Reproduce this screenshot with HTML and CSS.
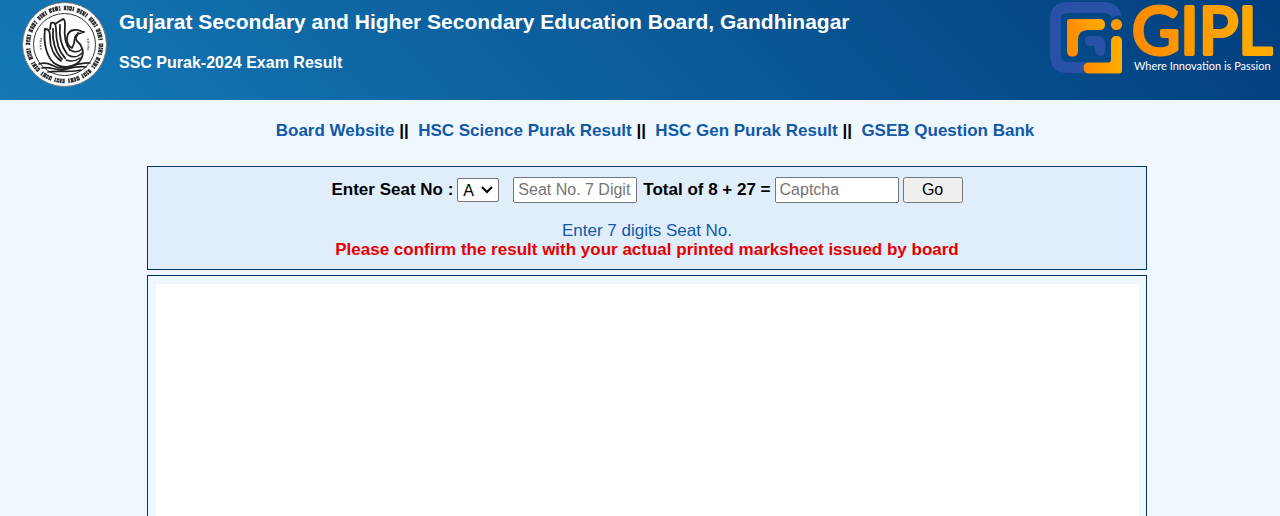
FILE: index.html
```
<!DOCTYPE html>
<html lang="en">
<head>
    <meta charset="UTF-8">
    <meta name="viewport" content="width=device-width, initial-scale=1">
    <title>GSEB Result</title>
    <link rel="stylesheet" href="styles.css">
</head>
<body>
    <header class="header">
        <svg class="seal" viewBox="0 0 85 85" aria-hidden="true">
            <circle cx="42.500" cy="42.500" r="42" fill="#fff" stroke="#777" stroke-width="1"/>
            <!-- lettering ring -->
            <g fill="none" stroke="#333">
                <circle cx="42.500" cy="42.500" r="36.500" stroke-width="4.500" stroke-dasharray="2.500 .6 1.800 .5 2.800 .7 1.500 3 3 .6 2 .5 3.200 .8 1.500 3.500"/>
                <circle cx="42.500" cy="42.500" r="36.500" stroke="#fff" stroke-width="1" stroke-dasharray="1 2.300 .8 3.800"/>
                <circle cx="42.500" cy="42.500" r="31" stroke-width="1"/>
                <circle cx="42.500" cy="42.500" r="24" stroke="#888" stroke-width="2" stroke-dasharray="1.500 1 2 .8 1 1 2 .7 1.500 62.400 1.500 1 2 .8 1 1 2 .7 1.500 100" transform="rotate(168 42.500 42.500)"/>
            </g>
            <!-- swan -->
            <g fill="none" stroke="#222" stroke-width="1.800" stroke-linecap="round" stroke-linejoin="round">
                <path d="M23 27C21 42 25 55 32 61C40 67 54 66 59 57C63 50 60 43 55 39C52 36 56 33 56 31"/>
                <path d="M50 46C43 43 43 29 52 28C57 27 59 30 62 30L56 32C50 34 55 39 50 46"/>
                <path d="M23 27C28 27 28 31 28 36C28 45 32 54 39 59"/>
                <path d="M28 27L29 21Q34 19 34 27C34 38 36 49 43 56"/>
                <path d="M33 22L41 17Q43 17 43 23C42 33 43 42 48 48"/>
                <path d="M38 23C37 34 39 44 45 52M31 27C30 38 33 50 40 57"/>
                <path d="M48 48C53 51 57 50 60 47M46 53C51 56 56 55 60 51M44 58C50 60 54 59 58 56" stroke-width="1.500"/>
                <path d="M17 62C24 60 28 62 34 65C45 69 53 60 68 61M20 66C29 64 36 70 45 67C53 65 58 64 64 65M26 70C36 68 48 71 59 68" stroke-width="1.700"/>
            </g>
        </svg>
        <div class="titles">
            <h1>Gujarat Secondary and Higher Secondary Education Board, Gandhinagar</h1>
            <h2>SSC Purak-2024 Exam Result</h2>
        </div>
        <svg class="gipl" viewBox="0 0 230 80" role="img" aria-label="GIPL, Where Innovation is Passion">
            <defs>
                <linearGradient id="orange" x1="0" y1="0" x2="1" y2="0">
                    <stop offset="0" stop-color="#ff8a00"/>
                    <stop offset="1" stop-color="#ffae00"/>
                </linearGradient>
            </defs>
            <path d="M0 18Q0 0 18 0H54Q68 0 72 14Q67 12 62 16Q60 11 54 11H18Q11 11 11 18V53Q11 60 18 60H37Q32 65 34 71H18Q0 71 0 53Z" fill="#2852a8"/>
            <path d="M40 34H47Q55 34 55 42V49Q55 54 50 54Q45 53 45 47V44H40Q35 44 35 39Q35 34 40 34Z" fill="#2852a8"/>
            <path d="M20 17H49.500Q55 17 55 22.500Q55 28 49.500 28H38Q28 28 28 38V49Q28 54.500 22.500 54.500Q17 54.500 17 49V20Q17 17 20 17Z" fill="url(#orange)"/>
            <path d="M66.500 34Q72 34 72 39.500V68.500Q72 71.500 69 71.500H39Q33.500 71.500 33.500 66Q33.500 60.500 39 60.500H58Q61 60.500 61 57.500V39.500Q61 34 66.500 34Z" fill="url(#orange)"/>
            <circle cx="66.500" cy="22.500" r="5.600" fill="#ff9b00"/>
            <text class="gipl-name" x="82" y="52">GIPL</text>
            <text class="gipl-tagline" x="84" y="68">Where Innovation is Passion</text>
        </svg>
    </header>

    <nav class="links">
        <a href="#">Board Website</a> ||&nbsp;
        <a href="#">HSC Science Purak Result</a> ||&nbsp;
        <a href="#">HSC Gen Purak Result</a> ||&nbsp;
        <a href="#">GSEB Question Bank</a>
    </nav>

    <main class="content">
        <form class="search">
            <div class="fields">
                <label for="series">Enter Seat No :</label>
                <select id="series">
                    <option>A</option>
                    <option>B</option>
                    <option>C</option>
                </select>
                <input id="seat" class="seat" type="text" maxlength="7" placeholder="Seat No. 7 Digit" aria-label="Seat No.">
                <label for="captcha">Total of 8 + 27 =</label>
                <input id="captcha" type="text" placeholder="Captcha">
                <button type="button">Go</button>
            </div>
            <p class="hint">Enter 7 digits Seat No.</p>
            <p class="notice">Please confirm the result with your actual printed marksheet issued by board</p>
        </form>
        <section class="result">
            <div class="sheet"></div>
        </section>
    </main>
</body>
</html>
```

FILE: styles.css
```
* {
    box-sizing: border-box;
}
body {
    margin: 0;
    background: #f0f8ff;
    color: #000;
    font-family: Arial, "Liberation Sans", sans-serif;
    font-size: 17px;
}
.header {
    display: flex;
    align-items: flex-start;
    height: 100px;
    padding: 2px 0 0 22px;
    background: linear-gradient(45deg, #1479b6, #023e7d);
    color: #fff;
}
.seal {
    flex: none;
    width: 85px;
    height: 85px;
}
.titles {
    flex: 1;
    padding: 8px 0 0 12px;
}
h1 {
    margin: 0 0 17px;
    font-size: 21px;
    line-height: 24px;
}
h2 {
    margin: 0;
    font-size: 16px;
    line-height: 24px;
}
.gipl {
    flex: none;
    width: 230px;
    height: 80px;
}
.gipl-name {
    font: 400 66px Lato, sans-serif;
    fill: url(#orange);
    stroke: url(#orange);
    stroke-width: 4px;
    stroke-linejoin: round;
}
.gipl-tagline {
    font: 11px Lato, sans-serif;
    fill: #fff;
}
.links {
    padding: 21px 0 25px 30px;
    font-weight: bold;
    line-height: 20px;
    text-align: center;
}
.links a {
    color: #1259a7;
    text-decoration: none;
}
.content {
    max-width: 1014px;
    margin: 0 auto;
    padding-left: 14px;
}
.search {
    padding: 10px;
    border: 1px solid #003366;
    background: #e0edfa;
    text-align: center;
}
.fields {
    display: flex;
    justify-content: center;
    align-items: center;
    gap: 4px;
    margin-bottom: 18px;
    font-weight: bold;
}
.fields select,
.fields input,
.fields button {
    height: 26px;
    font-family: inherit;
    font-size: 16px;
}
.fields select {
    width: 42px;
    height: 24px;
    padding: 0 5px;
    border: 1px solid #767676;
    border-radius: 2px;
    color: #000;
    background: #fff url("data:image/svg+xml,%3Csvg xmlns='http://www.w3.org/2000/svg' width='12' height='8'%3E%3Cpath d='M1 1l5 5 5-5' fill='none' stroke='%23000' stroke-width='2'/%3E%3C/svg%3E") no-repeat right 5px center;
    appearance: none;
}
.fields input {
    width: 124px;
    padding: 1px 3px;
}
.fields .seat {
    margin: 0 2px 0 10px;
}
.fields button {
    width: 60px;
}
.hint,
.notice {
    margin: 0;
    line-height: 19px;
}
.hint {
    color: #1259a7;
}
.notice {
    color: #e60000;
    font-weight: bold;
}
.result {
    margin-top: 5px;
    padding: 8px 7px 8px 8px;
    border: 1px solid #003366;
}
.sheet {
    min-height: 400px;
    background: #fff;
}
```
